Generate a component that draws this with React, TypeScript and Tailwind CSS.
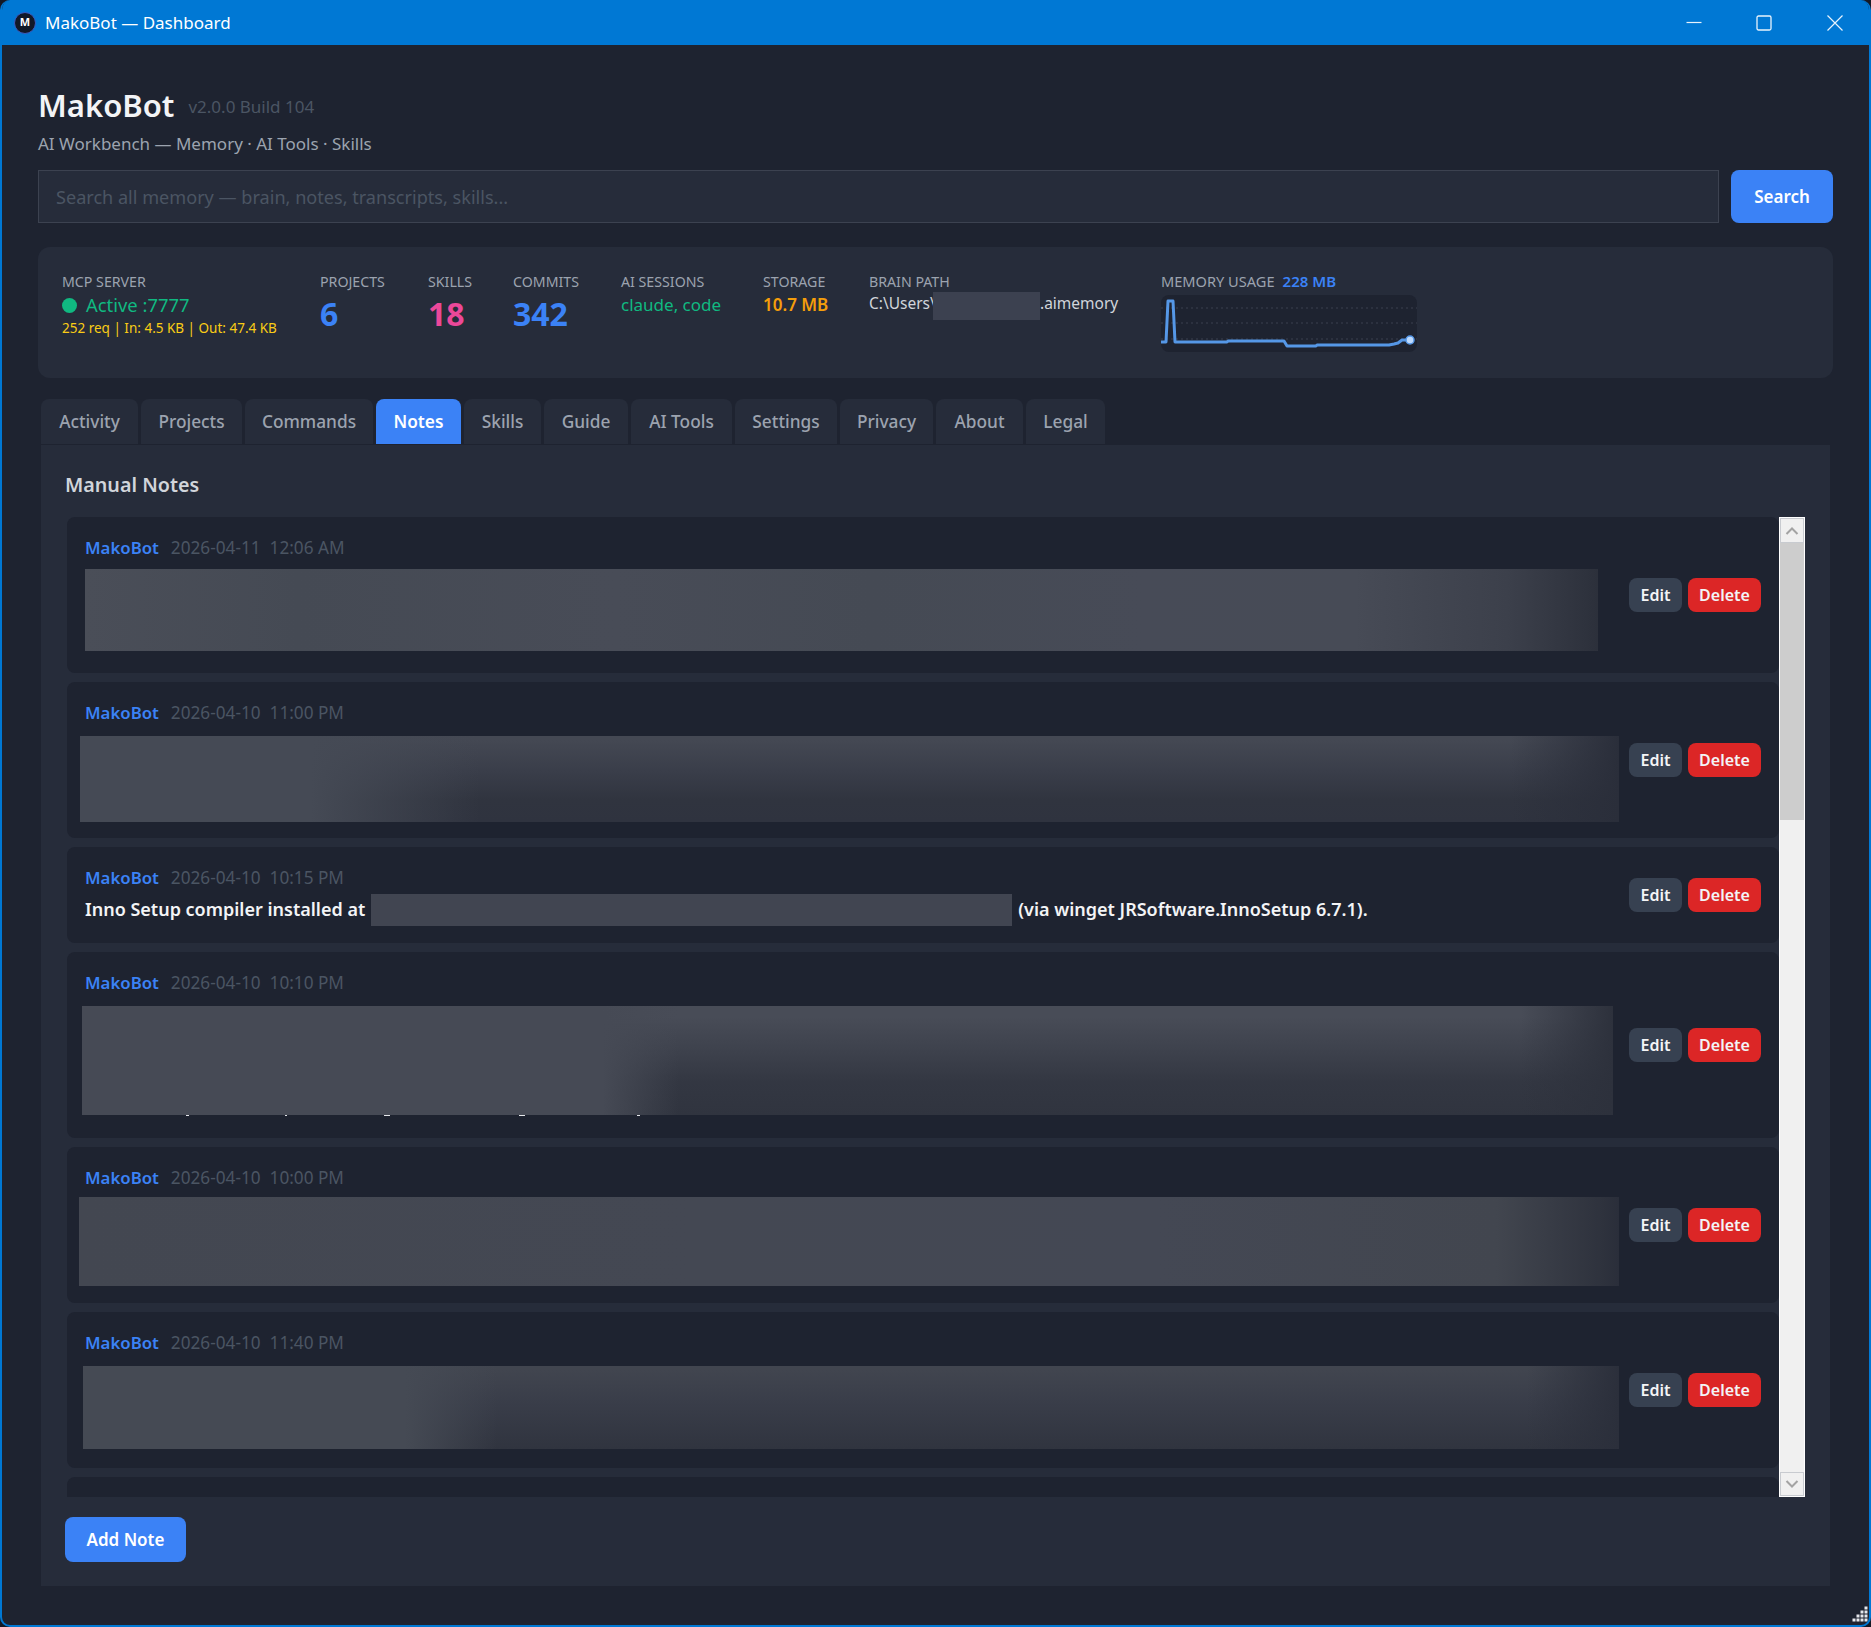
const tabs = [
  { label: "Activity", width: "w-[97px]" },
  { label: "Projects", width: "w-[101px]" },
  { label: "Commands", width: "w-[128px]" },
  { label: "Notes", width: "w-[85px]", active: true },
  { label: "Skills", width: "w-[77px]" },
  { label: "Guide", width: "w-[84px]" },
  { label: "AI Tools", width: "w-[101px]" },
  { label: "Settings", width: "w-[102px]" },
  { label: "Privacy", width: "w-[93px]" },
  { label: "About", width: "w-[87px]" },
  { label: "Legal", width: "w-[79px]" },
];

const notes = [
  {
    date: "2026-04-11",
    time: "12:06 AM",
    pad: "pb-[22px]",
    box: "ml-0 mt-[8px] h-[82px] w-[1513px] bg-[linear-gradient(to_right,#4a4e58_0%,#454a54_14%,#484c57_35%,#454a54_52%,#474b57_70%,#474b56_84%,#3c404b_94%,#2c303b_100%)]",
  },
  {
    date: "2026-04-10",
    time: "11:00 PM",
    pad: "pb-[16px]",
    box: "ml-[-5px] mt-[10px] h-[86px] w-[1539px] bg-[linear-gradient(to_right,transparent_93%,#2a2e3a_100%),linear-gradient(to_right,#454a55_15%,transparent_26%),linear-gradient(to_bottom,#444853_5%,#3a3e4a_40%,#30343f_75%,#2f333f_100%)]",
  },
  { date: "2026-04-10", time: "10:15 PM", pad: "pb-[17px]", inno: true },
  {
    date: "2026-04-10",
    time: "10:10 PM",
    pad: "pb-[22px]",
    crumbs: true,
    box: "ml-[-3px] mt-[10px] h-[109px] w-[1531px] bg-[linear-gradient(to_right,#464a55_34%,transparent_39%),linear-gradient(to_right,transparent_94%,#2d313c_100%),linear-gradient(to_bottom,#484c57_10%,#3e424d_40%,#333742_70%,#30343f_100%)]",
  },
  {
    date: "2026-04-10",
    time: "10:00 PM",
    pad: "pb-[17px]",
    box: "ml-[-6px] mt-[6px] h-[89px] w-[1540px] bg-[linear-gradient(to_right,#434751_0%,#444853_40%,#444854_70%,#42464f_92%,#2e323d_99%,#2a2e3a_100%)]",
  },
  {
    date: "2026-04-10",
    time: "11:40 PM",
    pad: "pb-[19px]",
    box: "ml-[-2px] mt-[10px] h-[83px] w-[1536px] bg-[linear-gradient(to_right,#454a54_21%,transparent_27%),linear-gradient(to_right,transparent_94%,#2b2f3b_100%),linear-gradient(to_bottom,#41454f_5%,#393d49_45%,#30343f_100%)]",
  },
];

function MemoryChart() {
  return (
    <svg width="256" height="57" viewBox="0 0 256 57" className="mt-[4px] rounded-lg bg-[#1e2330]">
      <g stroke="#3a404e" strokeWidth="1" strokeDasharray="2 3">
        <line x1="0" y1="13" x2="256" y2="13" />
        <line x1="0" y1="28" x2="256" y2="28" />
        <line x1="0" y1="44" x2="256" y2="44" />
      </g>
      <polyline
        fill="none"
        stroke="#5597e6"
        strokeWidth="3"
        strokeLinejoin="round"
        points="0,47 5,47 7,6 12,6 14,47 66,47 67,46 123,46 126,51 155,51 156,50 228,50 233,49 237,48 241,45 249,45"
      />
      <circle cx="249" cy="45" r="4" fill="#bfdbfe" stroke="#5597e6" strokeWidth="1.5" />
    </svg>
  );
}

function NoteCard({ note }: { note: (typeof notes)[number] }) {
  return (
    <div className="flex shrink-0 items-center rounded-lg bg-[#1e2330] px-[18px]">
      <div className={`min-w-0 flex-1 pt-[18px] ${note.pad}`}>
        <div className="flex h-[26px] items-center gap-[12px] leading-[26px]">
          <span className="text-[16.8px] font-semibold text-[#3b82f6]">MakoBot</span>
          <span className="whitespace-pre text-[17.2px] text-[#4b5563]">
            {note.date}  {note.time}
          </span>
        </div>
        {note.inno ? (
          <div className="mt-[3px] flex h-[32px] items-center whitespace-nowrap text-[18px] font-semibold text-[#f3f4f6]">
            <span className="mb-[2px]">Inno Setup compiler installed at</span>
            <span className="ml-[6px] mr-[6px] h-[32px] w-[641px] shrink-0 bg-[#414551]" />
            <span className="mb-[2px]">(via winget JRSoftware.InnoSetup 6.7.1).</span>
          </div>
        ) : (
          <div className={note.box} />
        )}
        {note.crumbs && (
          <svg width="600" height="1" className="block">
            <g fill="#e5e7eb">
              <rect x="101" y="0" width="3" height="1" />
              <rect x="200" y="0" width="2" height="1" />
              <rect x="299" y="0" width="6" height="1" />
              <rect x="434" y="0" width="6" height="1" />
              <rect x="552" y="0" width="3" height="1" />
            </g>
          </svg>
        )}
      </div>
      <div className="flex shrink-0 gap-[6px] text-[16px] font-semibold text-[#f3f4f6]">
        <button className="h-[34px] w-[53px] rounded-lg bg-[#374151]">Edit</button>
        <button className="h-[34px] w-[73px] rounded-lg bg-[#dc2626]">Delete</button>
      </div>
    </div>
  );
}

function ScrollBar() {
  return (
    <div className="flex w-[26px] shrink-0 flex-col border border-white bg-[#f0f0f0]">
      <div className="flex h-[25px] items-center justify-center border border-[#c8cbd0]">
        <svg width="14" height="10" viewBox="0 0 14 10" fill="none" stroke="#a3a3a3" strokeWidth="2">
          <path d="M1.5 8 L7 2.5 L12.5 8" />
        </svg>
      </div>
      <div className="h-[277px] bg-[#cdcdcd]" />
      <div className="flex-1" />
      <div className="flex h-[24px] items-center justify-center border border-[#c8cbd0]">
        <svg width="14" height="10" viewBox="0 0 14 10" fill="none" stroke="#a3a3a3" strokeWidth="2">
          <path d="M1.5 2 L7 7.5 L12.5 2" />
        </svg>
      </div>
    </div>
  );
}

function StatLabel({ children }: { children: React.ReactNode }) {
  return <div className="h-[20px] whitespace-nowrap text-[14.2px] leading-[20px] text-[#9ca3af]">{children}</div>;
}

export default function App() {
  return (
    <div className="h-[1627px] w-[1871px] overflow-hidden bg-[#141824] text-white [font-family:'Noto_Sans',sans-serif]">
      <div className="relative flex h-full flex-col overflow-hidden rounded-[10px] border-x-2 border-b-2 border-[#0078d4] bg-[#1e2330]">
        <div className="mx-[-2px] flex h-[45px] shrink-0 items-center bg-[#0078d4] pl-[14px]">
          <div className="flex h-[22px] w-[22px] items-center justify-center rounded-full border border-[#3b5bc0] bg-[#111827] text-[11px] font-bold text-white">
            M
          </div>
          <span className="ml-[9px] text-[17px] text-white">MakoBot — Dashboard</span>
          <div className="ml-auto flex items-center">
            <svg width="16" height="16" viewBox="0 0 16 16" fill="none" stroke="#e8f3fc" strokeWidth="1.2" className="mr-[54px]">
              <path d="M0.5 7.5 H15.5" />
            </svg>
            <svg width="16" height="16" viewBox="0 0 16 16" fill="none" stroke="#e8f3fc" strokeWidth="1.3" className="mr-[55px]">
              <rect x="1" y="1" width="14" height="14" rx="1.5" />
            </svg>
            <svg width="16" height="16" viewBox="0 0 16 16" fill="none" stroke="#e8f3fc" strokeWidth="1.2" className="mr-[28px]">
              <path d="M0.5 0.5 L15.5 15.5 M15.5 0.5 L0.5 15.5" />
            </svg>
          </div>
        </div>

        <div className="flex flex-1 flex-col px-[36px] pt-[40px]">
          <div className="flex h-[40px] items-center">
            <h1 className="text-[31px] font-semibold leading-[40px] text-[#f3f4f6]">MakoBot</h1>
            <span className="ml-[14px] mt-[4px] text-[17px] text-[#4b5563]">v2.0.0 Build 104</span>
          </div>
          <p className="mt-[7px] text-[17px] leading-[24px] text-[#9ca3af]">AI Workbench — Memory · AI Tools · Skills</p>

          <div className="mt-[14px] flex h-[53px] gap-[12px]">
            <input
              className="h-full flex-1 border border-[#3c4250] bg-[#262c3a] px-[17px] text-[18.1px] outline-none placeholder:text-[#4b5563]"
              placeholder="Search all memory — brain, notes, transcripts, skills..."
            />
            <button className="h-full w-[102px] rounded-lg bg-[#3b82f6] text-[17px] font-semibold">Search</button>
          </div>

          <div className="mt-[24px] flex h-[131px] gap-[42px] rounded-xl bg-[#262c3a] px-[24px] pt-[25px]">
            <div className="w-[216px]">
              <StatLabel>MCP SERVER</StatLabel>
              <div className="flex h-[26px] items-center gap-[9px] text-[18.4px] text-[#10b981]">
                <span className="h-[15px] w-[15px] rounded-full bg-[#10b981]" />
                Active :7777
              </div>
              <div className="whitespace-nowrap text-[13.5px] leading-[20px] text-[#facc15]">252 req | In: 4.5 KB | Out: 47.4 KB</div>
            </div>
            <div className="w-[66px]">
              <StatLabel>PROJECTS</StatLabel>
              <div className="text-[32px] font-bold leading-[44px] text-[#3b82f6]">6</div>
            </div>
            <div className="w-[43px]">
              <StatLabel>SKILLS</StatLabel>
              <div className="text-[32px] font-bold leading-[44px] text-[#ec4899]">18</div>
            </div>
            <div className="w-[66px]">
              <StatLabel>COMMITS</StatLabel>
              <div className="text-[32px] font-bold leading-[44px] text-[#3b82f6]">342</div>
            </div>
            <div className="w-[100px]">
              <StatLabel>AI SESSIONS</StatLabel>
              <div className="whitespace-nowrap text-[17px] leading-[26px] text-[#10b981]">claude, code</div>
            </div>
            <div className="w-[64px]">
              <StatLabel>STORAGE</StatLabel>
              <div className="whitespace-nowrap text-[17px] font-semibold leading-[26px] text-[#f59e0b]">10.7 MB</div>
            </div>
            <div className="w-[250px]">
              <StatLabel>BRAIN PATH</StatLabel>
              <div className="relative h-[26px] text-[15.5px] leading-[22px] text-[#d1d5db]">
                <span>C:\Users\</span>
                <span className="absolute left-[64px] top-0 h-[28px] w-[107px] bg-[#3c4150]" />
                <span className="absolute left-[171px] top-0">.aimemory</span>
              </div>
            </div>
            <div className="-mt-px">
              <div className="flex h-[20px] items-center gap-[8px] leading-[20px]">
                <span className="text-[14.6px] text-[#9ca3af]">MEMORY USAGE</span>
                <span className="text-[15px] font-semibold text-[#3b82f6]">228 MB</span>
              </div>
              <MemoryChart />
            </div>
          </div>

          <div className="mt-[21px] flex h-[45px] shrink-0 gap-[3px] px-[3px] text-[17.3px] font-medium">
            {tabs.map((tab) => (
              <div
                key={tab.label}
                className={`${tab.width} flex h-[45px] items-center justify-center rounded-t-lg ${
                  tab.active ? "bg-[#3b82f6] font-semibold text-white" : "bg-[#262c3a] text-[#9ca3af]"
                }`}
              >
                {tab.label}
              </div>
            ))}
          </div>

          <div className="mx-[3px] mt-px flex h-[1141px] flex-col bg-[#262c3a] pl-[24px] pr-[25px] pt-[25px]">
            <h2 className="h-[30px] text-[19.7px] font-semibold leading-[30px] text-[#d1d5db]">Manual Notes</h2>
            <div className="mt-[17px] flex h-[980px] pl-[2px]">
              <div className="flex min-w-0 flex-1 flex-col gap-[9px] overflow-hidden">
                {notes.map((note) => (
                  <NoteCard key={note.date + note.time} note={note} />
                ))}
                <div className="h-[60px] shrink-0 rounded-lg bg-[#1e2330]" />
              </div>
              <ScrollBar />
            </div>
            <button className="mt-[20px] h-[45px] w-[121px] rounded-lg bg-[#3b82f6] text-[17px] font-semibold">Add Note</button>
          </div>
        </div>

        <svg width="16" height="16" viewBox="0 0 16 16" fill="#e5e7eb" className="absolute bottom-[3px] right-[1px]">
          <rect x="12.5" y="0.5" width="3" height="3" />
          <rect x="8.5" y="4.5" width="3" height="3" />
          <rect x="12.5" y="4.5" width="3" height="3" />
          <rect x="4.5" y="8.5" width="3" height="3" />
          <rect x="8.5" y="8.5" width="3" height="3" />
          <rect x="12.5" y="8.5" width="3" height="3" />
          <rect x="0.5" y="12.5" width="3" height="3" />
          <rect x="4.5" y="12.5" width="3" height="3" />
          <rect x="8.5" y="12.5" width="3" height="3" />
          <rect x="12.5" y="12.5" width="3" height="3" />
        </svg>
      </div>
    </div>
  );
}
